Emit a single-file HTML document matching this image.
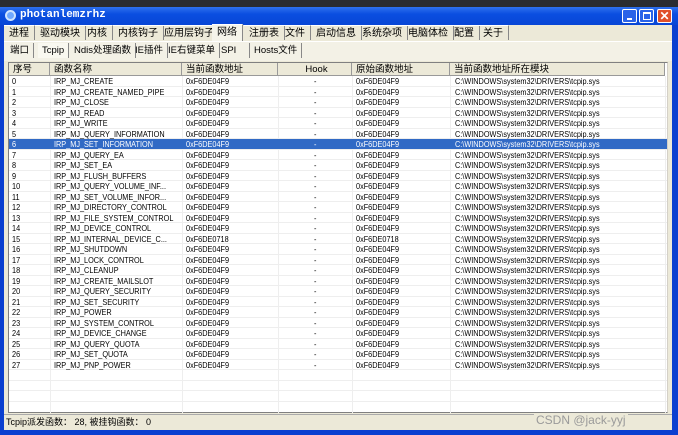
<!DOCTYPE html>
<html><head><meta charset="utf-8"><style>
*{margin:0;padding:0;box-sizing:border-box}
body{width:678px;height:435px;overflow:hidden;background:#2a2c30;font-family:"Liberation Sans","Noto Sans CJK SC",sans-serif;font-size:9px;color:#000;position:relative}
.abs{position:absolute}
#win{left:0;top:7px;width:678px;height:428px;background:#0a3fd0;}
#title{left:0;top:7px;width:678px;height:18px;background:linear-gradient(#2f72ee,#0a4ee0 40%,#0846d6);color:#fff;font-family:"Liberation Mono",monospace;font-weight:bold;font-size:11px;line-height:17px;padding-left:20px}
.btn{top:9px;width:15px;height:14px;border:1px solid #fff;border-radius:2px;background:#2a63e8}
#client{left:4px;top:25px;width:668px;height:405px;background:#ece9d8}
.tab{top:0;height:15px;line-height:15px;border-right:1px solid #888;border-top:1px solid #fff;padding:0 5px;font-size:10px;white-space:nowrap}
.st{top:18px;height:15px;line-height:15px;border-right:1px solid #888;padding:0 4px;font-size:9.5px;white-space:nowrap}
#table{left:4px;top:37px;width:660px;height:351px;background:#fff;border:1px solid #808080;border-right-color:#d4d0c8}
.hd{position:absolute;top:0;height:13px;line-height:13px;background:#ece9d8;border-right:1px solid #999;border-bottom:1px solid #999;padding-left:4px;font-size:9.5px}
.r{position:absolute;left:0;width:658px;height:10.5px;line-height:10.5px;border-bottom:1px solid #eeeeee;font-size:8.5px;white-space:nowrap}
.r span{position:absolute;top:0;transform:scaleX(0.86);transform-origin:left}
.r .a{left:3px}.r .b{left:45px}.r .c{left:177px}.r .d{left:305px}.r .e{left:347px}.r .f{left:446px}
.sel{background:#316ac5;color:#fff}
.vl{position:absolute;top:13px;width:1px;height:337px;background:#eee}
#status{left:0;top:389px;width:668px;height:15px;line-height:15px;font-size:9px;padding-left:2px;border-top:1px solid #aaa}
</style></head><body>
<div class="abs" id="win"></div>
<div class="abs" id="title">photanlemzrhz</div>
<div class="abs" style="left:5px;top:10px;width:11px;height:11px;border-radius:50%;border:2px solid #cfe4ff;background:#6fa8ff"></div>
<div class="abs btn" style="left:622px"><div class="abs" style="left:4px;top:8px;width:5px;height:2px;background:#fff"></div></div>
<div class="abs btn" style="left:639px"><div class="abs" style="left:3px;top:2px;width:8px;height:8px;border:1px solid #fff;border-top-width:2px"></div></div>
<div class="abs btn" style="left:657px;background:#e0502a;color:#fff;font-size:12px;line-height:12px;text-align:center;font-weight:bold">✕</div>
<div class="abs" id="client">
 <div class="abs tab" style="left:0">进程</div>
 <div class="abs tab" style="left:31px">驱动模块</div>
 <div class="abs tab" style="left:78px">内核</div>
 <div class="abs tab" style="left:109px">内核钩子</div>
 <div class="abs tab" style="left:155px">应用层钩子</div>
 <div class="abs tab" style="left:208px;background:#f5f4ea;height:17px;top:-1px">网络</div>
 <div class="abs tab" style="left:240px">注册表</div>
 <div class="abs tab" style="left:276px">文件</div>
 <div class="abs tab" style="left:307px">启动信息</div>
 <div class="abs tab" style="left:353px">系统杂项</div>
 <div class="abs tab" style="left:399px">电脑体检</div>
 <div class="abs tab" style="left:445px">配置</div>
 <div class="abs tab" style="left:474px">关于</div>
 <div class="abs" style="left:0;top:16px;width:668px;height:20px;background:#f3f1e6;border-top:1px solid #fff"></div>
 <div class="abs st" style="left:2px">端口</div>
 <div class="abs st" style="left:34px;background:#f9f8f0">Tcpip</div>
 <div class="abs st" style="left:66px">Ndis处理函数</div>
 <div class="abs st" style="left:127px">IE插件</div>
 <div class="abs st" style="left:160px">IE右键菜单</div>
 <div class="abs st" style="left:213px;width:33px">SPI</div>
 <div class="abs st" style="left:246px">Hosts文件</div>
 <div class="abs" id="table">
  <div class="hd" style="left:0;width:41px">序号</div>
  <div class="hd" style="left:41px;width:132px">函数名称</div>
  <div class="hd" style="left:173px;width:96px">当前函数地址</div>
  <div class="hd" style="left:269px;width:74px;text-align:center">Hook</div>
  <div class="hd" style="left:343px;width:98px">原始函数地址</div>
  <div class="hd" style="left:441px;width:215px">当前函数地址所在模块</div>
  <div class="vl" style="left:41px"></div><div class="vl" style="left:173px"></div><div class="vl" style="left:269px"></div><div class="vl" style="left:343px"></div><div class="vl" style="left:441px"></div><div class="vl" style="left:656px"></div>
  <div class="r" style="top:13px"><span class="a">0</span><span class="b">IRP_MJ_CREATE</span><span class="c">0xF6DE04F9</span><span class="d">-</span><span class="e">0xF6DE04F9</span><span class="f">C:\WINDOWS\system32\DRIVERS\tcpip.sys</span></div>
  <div class="r" style="top:23.5px"><span class="a">1</span><span class="b">IRP_MJ_CREATE_NAMED_PIPE</span><span class="c">0xF6DE04F9</span><span class="d">-</span><span class="e">0xF6DE04F9</span><span class="f">C:\WINDOWS\system32\DRIVERS\tcpip.sys</span></div>
  <div class="r" style="top:34px"><span class="a">2</span><span class="b">IRP_MJ_CLOSE</span><span class="c">0xF6DE04F9</span><span class="d">-</span><span class="e">0xF6DE04F9</span><span class="f">C:\WINDOWS\system32\DRIVERS\tcpip.sys</span></div>
  <div class="r" style="top:44.5px"><span class="a">3</span><span class="b">IRP_MJ_READ</span><span class="c">0xF6DE04F9</span><span class="d">-</span><span class="e">0xF6DE04F9</span><span class="f">C:\WINDOWS\system32\DRIVERS\tcpip.sys</span></div>
  <div class="r" style="top:55px"><span class="a">4</span><span class="b">IRP_MJ_WRITE</span><span class="c">0xF6DE04F9</span><span class="d">-</span><span class="e">0xF6DE04F9</span><span class="f">C:\WINDOWS\system32\DRIVERS\tcpip.sys</span></div>
  <div class="r" style="top:65.5px"><span class="a">5</span><span class="b">IRP_MJ_QUERY_INFORMATION</span><span class="c">0xF6DE04F9</span><span class="d">-</span><span class="e">0xF6DE04F9</span><span class="f">C:\WINDOWS\system32\DRIVERS\tcpip.sys</span></div>
  <div class="r sel" style="top:76px"><span class="a">6</span><span class="b">IRP_MJ_SET_INFORMATION</span><span class="c">0xF6DE04F9</span><span class="d">-</span><span class="e">0xF6DE04F9</span><span class="f">C:\WINDOWS\system32\DRIVERS\tcpip.sys</span></div>
  <div class="r" style="top:86.5px"><span class="a">7</span><span class="b">IRP_MJ_QUERY_EA</span><span class="c">0xF6DE04F9</span><span class="d">-</span><span class="e">0xF6DE04F9</span><span class="f">C:\WINDOWS\system32\DRIVERS\tcpip.sys</span></div>
  <div class="r" style="top:97px"><span class="a">8</span><span class="b">IRP_MJ_SET_EA</span><span class="c">0xF6DE04F9</span><span class="d">-</span><span class="e">0xF6DE04F9</span><span class="f">C:\WINDOWS\system32\DRIVERS\tcpip.sys</span></div>
  <div class="r" style="top:107.5px"><span class="a">9</span><span class="b">IRP_MJ_FLUSH_BUFFERS</span><span class="c">0xF6DE04F9</span><span class="d">-</span><span class="e">0xF6DE04F9</span><span class="f">C:\WINDOWS\system32\DRIVERS\tcpip.sys</span></div>
  <div class="r" style="top:118px"><span class="a">10</span><span class="b">IRP_MJ_QUERY_VOLUME_INF...</span><span class="c">0xF6DE04F9</span><span class="d">-</span><span class="e">0xF6DE04F9</span><span class="f">C:\WINDOWS\system32\DRIVERS\tcpip.sys</span></div>
  <div class="r" style="top:128.5px"><span class="a">11</span><span class="b">IRP_MJ_SET_VOLUME_INFOR...</span><span class="c">0xF6DE04F9</span><span class="d">-</span><span class="e">0xF6DE04F9</span><span class="f">C:\WINDOWS\system32\DRIVERS\tcpip.sys</span></div>
  <div class="r" style="top:139px"><span class="a">12</span><span class="b">IRP_MJ_DIRECTORY_CONTROL</span><span class="c">0xF6DE04F9</span><span class="d">-</span><span class="e">0xF6DE04F9</span><span class="f">C:\WINDOWS\system32\DRIVERS\tcpip.sys</span></div>
  <div class="r" style="top:149.5px"><span class="a">13</span><span class="b">IRP_MJ_FILE_SYSTEM_CONTROL</span><span class="c">0xF6DE04F9</span><span class="d">-</span><span class="e">0xF6DE04F9</span><span class="f">C:\WINDOWS\system32\DRIVERS\tcpip.sys</span></div>
  <div class="r" style="top:160px"><span class="a">14</span><span class="b">IRP_MJ_DEVICE_CONTROL</span><span class="c">0xF6DE04F9</span><span class="d">-</span><span class="e">0xF6DE04F9</span><span class="f">C:\WINDOWS\system32\DRIVERS\tcpip.sys</span></div>
  <div class="r" style="top:170.5px"><span class="a">15</span><span class="b">IRP_MJ_INTERNAL_DEVICE_C...</span><span class="c">0xF6DE0718</span><span class="d">-</span><span class="e">0xF6DE0718</span><span class="f">C:\WINDOWS\system32\DRIVERS\tcpip.sys</span></div>
  <div class="r" style="top:181px"><span class="a">16</span><span class="b">IRP_MJ_SHUTDOWN</span><span class="c">0xF6DE04F9</span><span class="d">-</span><span class="e">0xF6DE04F9</span><span class="f">C:\WINDOWS\system32\DRIVERS\tcpip.sys</span></div>
  <div class="r" style="top:191.5px"><span class="a">17</span><span class="b">IRP_MJ_LOCK_CONTROL</span><span class="c">0xF6DE04F9</span><span class="d">-</span><span class="e">0xF6DE04F9</span><span class="f">C:\WINDOWS\system32\DRIVERS\tcpip.sys</span></div>
  <div class="r" style="top:202px"><span class="a">18</span><span class="b">IRP_MJ_CLEANUP</span><span class="c">0xF6DE04F9</span><span class="d">-</span><span class="e">0xF6DE04F9</span><span class="f">C:\WINDOWS\system32\DRIVERS\tcpip.sys</span></div>
  <div class="r" style="top:212.5px"><span class="a">19</span><span class="b">IRP_MJ_CREATE_MAILSLOT</span><span class="c">0xF6DE04F9</span><span class="d">-</span><span class="e">0xF6DE04F9</span><span class="f">C:\WINDOWS\system32\DRIVERS\tcpip.sys</span></div>
  <div class="r" style="top:223px"><span class="a">20</span><span class="b">IRP_MJ_QUERY_SECURITY</span><span class="c">0xF6DE04F9</span><span class="d">-</span><span class="e">0xF6DE04F9</span><span class="f">C:\WINDOWS\system32\DRIVERS\tcpip.sys</span></div>
  <div class="r" style="top:233.5px"><span class="a">21</span><span class="b">IRP_MJ_SET_SECURITY</span><span class="c">0xF6DE04F9</span><span class="d">-</span><span class="e">0xF6DE04F9</span><span class="f">C:\WINDOWS\system32\DRIVERS\tcpip.sys</span></div>
  <div class="r" style="top:244px"><span class="a">22</span><span class="b">IRP_MJ_POWER</span><span class="c">0xF6DE04F9</span><span class="d">-</span><span class="e">0xF6DE04F9</span><span class="f">C:\WINDOWS\system32\DRIVERS\tcpip.sys</span></div>
  <div class="r" style="top:254.5px"><span class="a">23</span><span class="b">IRP_MJ_SYSTEM_CONTROL</span><span class="c">0xF6DE04F9</span><span class="d">-</span><span class="e">0xF6DE04F9</span><span class="f">C:\WINDOWS\system32\DRIVERS\tcpip.sys</span></div>
  <div class="r" style="top:265px"><span class="a">24</span><span class="b">IRP_MJ_DEVICE_CHANGE</span><span class="c">0xF6DE04F9</span><span class="d">-</span><span class="e">0xF6DE04F9</span><span class="f">C:\WINDOWS\system32\DRIVERS\tcpip.sys</span></div>
  <div class="r" style="top:275.5px"><span class="a">25</span><span class="b">IRP_MJ_QUERY_QUOTA</span><span class="c">0xF6DE04F9</span><span class="d">-</span><span class="e">0xF6DE04F9</span><span class="f">C:\WINDOWS\system32\DRIVERS\tcpip.sys</span></div>
  <div class="r" style="top:286px"><span class="a">26</span><span class="b">IRP_MJ_SET_QUOTA</span><span class="c">0xF6DE04F9</span><span class="d">-</span><span class="e">0xF6DE04F9</span><span class="f">C:\WINDOWS\system32\DRIVERS\tcpip.sys</span></div>
  <div class="r" style="top:296.5px"><span class="a">27</span><span class="b">IRP_MJ_PNP_POWER</span><span class="c">0xF6DE04F9</span><span class="d">-</span><span class="e">0xF6DE04F9</span><span class="f">C:\WINDOWS\system32\DRIVERS\tcpip.sys</span></div>
  <div class="r" style="top:307px"></div>
  <div class="r" style="top:317.5px"></div>
  <div class="r" style="top:328px"></div>
  <div class="r" style="top:338.5px;border-bottom:none"></div>
 </div>
 <div class="abs" id="status">Tcpip派发函数： 28, 被挂钩函数： 0</div>
 <div class="abs" style="left:530px;top:388px;font-size:12px;color:#9a9a9a;background:#ece9d8;padding:0 2px">CSDN @jack-yyj</div>
</div>
</body></html>
